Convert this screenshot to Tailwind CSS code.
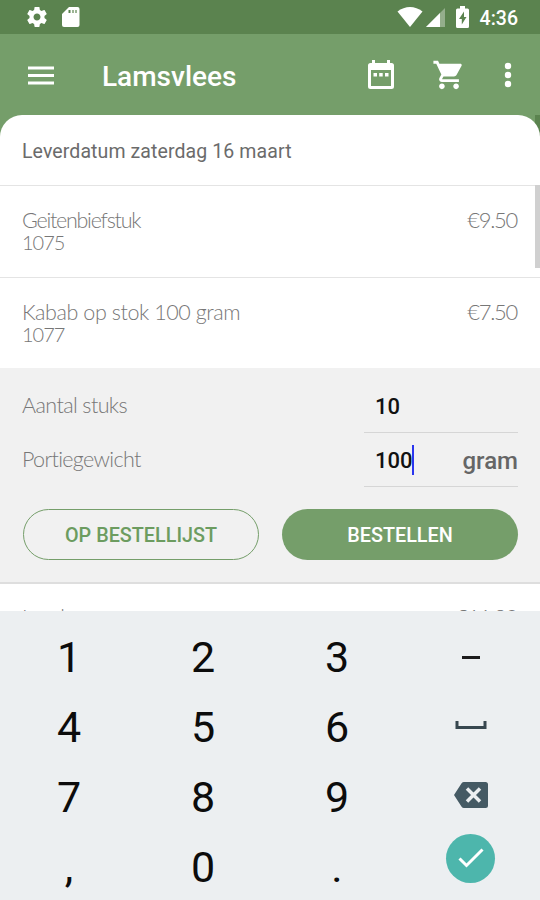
<!DOCTYPE html>
<html lang="nl">
<head>
    <meta charset="UTF-8">
    <meta name="viewport" content="width=device-width, initial-scale=1.0">
    <title>Lamsvlees</title>
    <script src="https://cdn.jsdelivr.net/npm/@tailwindcss/browser@4"></script>
</head>
<body class="bg-[#759e6a] font-['Roboto',sans-serif]">
<div class="w-[540px] h-[900px] overflow-hidden flex flex-col">
    <!-- Status bar -->
    <div class="h-[34px] shrink-0 bg-[#5b834f] flex items-center justify-between pl-[25px] pr-[22px] text-white">
        <div class="flex items-center gap-[11px]">
            <svg class="w-6 h-6" viewBox="0 0 24 24" fill="currentColor"><path d="M19.43 12.98c.04-.32.07-.64.07-.98s-.03-.66-.07-.98l2.11-1.65c.19-.15.24-.42.12-.64l-2-3.46c-.12-.22-.39-.3-.61-.22l-2.49 1c-.52-.4-1.08-.73-1.69-.98l-.38-2.65C14.46 2.18 14.25 2 14 2h-4c-.25 0-.46.18-.49.42l-.38 2.65c-.61.25-1.17.59-1.69.98l-2.49-1c-.23-.09-.49 0-.61.22l-2 3.46c-.13.22-.07.49.12.64l2.11 1.65c-.04.32-.07.65-.07.98s.03.66.07.98l-2.11 1.65c-.19.15-.24.42-.12.64l2 3.46c.12.22.39.3.61.22l2.49-1c.52.4 1.08.73 1.69.98l.38 2.65c.03.24.24.42.49.42h4c.25 0 .46-.18.49-.42l.38-2.65c.61-.25 1.17-.59 1.69-.98l2.49 1c.23.09.49 0 .61-.22l2-3.46c.12-.22.07-.49-.12-.64l-2.11-1.65zM12 15.5c-1.93 0-3.5-1.57-3.5-3.5s1.57-3.5 3.5-3.5 3.5 1.57 3.5 3.5-1.57 3.5-3.5 3.5z"/></svg>
            <svg class="w-[22px] h-6" viewBox="0 0 22 24"><path fill="currentColor" d="M9 2h8.500a2 2 0 0 1 2 2v16a2 2 0 0 1-2 2H4a2 2 0 0 1-2-2V9z"/><path fill="#5b834f" d="M8.500 5h2v3h-2z"/><path fill="#5b834f" fill-opacity=".6" d="M12 5h2v3h-2zM15 5h2v3h-2z"/></svg>
        </div>
        <div class="flex items-center">
            <svg class="w-[26px] h-[22px]" viewBox="0 0 26 22"><path fill="currentColor" d="M13 21L.5 5.500C8-.5 18-.5 25.500 5.500z"/></svg>
            <svg class="w-[20px] h-[20px] ml-[3px]" viewBox="0 0 20 20"><path fill="#fff" fill-opacity=".35" d="M0 20L19 1v19z"/><path fill="#fff" d="M0 20L14 6v14z"/></svg>
            <svg class="w-[13px] h-[22px] ml-[10px]" viewBox="0 0 13 22"><path fill="currentColor" d="M4 0h5v2.500h2.500A1.500 1.500 0 0 1 13 4v16.500a1.500 1.500 0 0 1-1.500 1.500h-10A1.500 1.500 0 0 1 0 20.500V4a1.500 1.500 0 0 1 1.500-1.500H4z"/><path fill="#5b834f" d="M8 5.500L3 13h2.800v5.500L10.500 11H8z"/></svg>
            <span class="ml-[11px] text-[19.500px] font-medium leading-none mt-[3px]">4:36</span>
        </div>
    </div>

    <!-- Toolbar -->
    <div class="h-[81px] shrink-0 flex items-center text-white pl-[28px]">
        <svg class="w-[26px] h-[19px] mt-[2px]" viewBox="0 0 26 19" fill="currentColor"><path d="M0 .5h26v3H0zM0 8h26v3H0zM0 15.500h26v3H0z"/></svg>
        <h1 class="ml-[48px] text-[28px] font-medium w-[265px] leading-none mt-[5px]">Lamsvlees</h1>
        <svg class="w-[28px] h-[30px] mt-px" viewBox="0 0 28 30"><path fill="currentColor" fill-rule="evenodd" d="M5 0h3v3h12V0h3v3h1.500A2.500 2.500 0 0 1 27 5.500v21a2.500 2.500 0 0 1-2.500 2.500h-21A2.500 2.500 0 0 1 1 26.500v-21A2.500 2.500 0 0 1 3.500 3H5zM4 10v16h20V10z"/><path fill="currentColor" d="M6.500 13h3.500v3.500H6.500zM12.200 13h3.500v3.500h-3.500zM18 13h3.500v3.500H18z"/></svg>
        <svg class="w-[34px] h-[34px] ml-[37px]" viewBox="0 0 24 24" fill="currentColor"><path d="M7 18c-1.100 0-1.990.9-1.990 2S5.900 22 7 22s2-.9 2-2-.9-2-2-2zM1 2v2h2l3.600 7.590-1.350 2.450c-.16.280-.25.610-.25.960 0 1.100.9 2 2 2h12v-2H7.420c-.14 0-.25-.11-.25-.25l.03-.12.9-1.630h7.450c.75 0 1.410-.41 1.750-1.030l3.580-6.490c.08-.14.12-.31.12-.48 0-.55-.45-1-1-1H5.210l-.94-2H1zm16 16c-1.100 0-1.990.9-1.990 2s.89 2 1.990 2 2-.9 2-2-.9-2-2-2z"/></svg>
        <svg class="w-[8px] h-[26px] ml-[38px]" viewBox="0 0 8 26" fill="currentColor"><circle cx="4" cy="4" r="3.200"/><circle cx="4" cy="13" r="3.200"/><circle cx="4" cy="22" r="3.200"/></svg>
    </div>

    <!-- Order list -->
    <div class="relative h-[496px] shrink-0 bg-[linear-gradient(to_right,#759e6a_535px,#5b834f_535px)]">
        <div class="h-full bg-white rounded-t-[22px] overflow-hidden text-[#777] font-['Lato',sans-serif] font-light text-[21.5px] leading-[22px]">
            <div class="h-[71px] border-b border-[#e4e4e4] px-[22px] flex items-center font-['Roboto',sans-serif] font-normal text-[19.5px] text-[#6b6b6b] tracking-[0.1px] pt-[4px]">Leverdatum zaterdag 16 maart</div>
            <div class="h-[92px] border-b border-[#e4e4e4] px-[22px] pt-[23px] flex justify-between">
                <div>
                    <p class="tracking-[-1.25px]">Geitenbiefstuk</p>
                    <p class="text-[20px] tracking-[-1px]">1075</p>
                </div>
                <p class="text-[22px] tracking-[-1.3px] mr-px">€9.50</p>
            </div>
            <div class="h-[90px] px-[22px] pt-[23px] flex justify-between">
                <div>
                    <p class="tracking-[-0.42px]">Kabab op stok 100 gram</p>
                    <p class="text-[20px] tracking-[-1px]">1077</p>
                </div>
                <p class="text-[22px] tracking-[-1.3px] mr-px">€7.50</p>
            </div>

            <!-- Order form -->
            <div class="h-[216px] bg-[#f1f1f1] border-b-2 border-[#dedede] px-[22px] pt-[11px]">
                <div class="flex justify-between h-[54px]">
                    <span class="pt-[15px] tracking-[-0.6px]">Aantal stuks</span>
                    <div class="w-[154px] border-b border-[#d6d6d6] pl-[11px] pt-[17px] font-['Roboto',sans-serif] font-medium text-[22px] text-[#111]">10</div>
                </div>
                <div class="flex justify-between h-[54px]">
                    <span class="pt-[15px] tracking-[-0.65px]">Portiegewicht</span>
                    <div class="w-[154px] border-b border-[#d6d6d6] pl-[11px] pt-[17px] font-['Roboto',sans-serif] font-medium text-[22px] text-[#111] flex items-start">
                        <span>100</span>
                        <span class="w-[2px] h-[30px] -mt-[5px] -ml-px bg-[#2a35ee]"></span>
                        <span class="ml-auto text-[24px] text-[#666]">gram</span>
                    </div>
                </div>
                <div class="flex gap-[23px] pl-px mt-[22px] font-['Roboto',sans-serif] font-medium text-[19.800px]">
                    <button class="w-[236px] h-[51px] rounded-full border border-[#759e6a] text-[#6c9c60] pt-[3px]">OP BESTELLIJST</button>
                    <button class="w-[236px] h-[51px] rounded-full bg-[#759e6a] text-white pt-[3px]">BESTELLEN</button>
                </div>
            </div>
            <div class="px-[22px] pt-[22px] flex justify-between">
                <p class="tracking-[-0.6px]">Lende</p>
                <p class="text-[22px] tracking-[-1.3px] mr-px">€11.90</p>
            </div>
        </div>
        <!-- Scrollbar -->
        <div class="absolute right-0 top-[70px] w-[5px] h-[83px] bg-[#d0d0d0]"></div>
    </div>

    <!-- Numeric keyboard -->
    <div class="h-[289px] shrink-0 bg-[#eceff1] pt-[11px] pl-[2px] grid grid-cols-[repeat(4,134px)] auto-rows-[70px] items-center justify-items-center text-[43px] leading-none text-[#0c0c0c]">
        <span>1</span>
        <span>2</span>
        <span>3</span>
        <span class="w-[18px] h-[3px] bg-[#1c1c1c]"></span>
        <span>4</span>
        <span>5</span>
        <span>6</span>
        <svg class="w-[32px] h-[8px] -mt-[4px]" viewBox="0 0 32 8"><path fill="none" stroke="#37474f" stroke-width="3" d="M2 0v6.500h28V0"/></svg>
        <span>7</span>
        <span>8</span>
        <span>9</span>
        <svg class="w-[34px] h-[26px] -mt-[4px]" viewBox="0 0 34 26"><path fill="#455a64" d="M10 0h21.500A2.500 2.500 0 0 1 34 2.500v21a2.500 2.500 0 0 1-2.500 2.500H10a3 3 0 0 1-2.400-1.200L0 13l7.600-11.800A3 3 0 0 1 10 0z"/><path stroke="#eceff1" stroke-width="3.500" d="M13 6.500l13 13M26 6.500l-13 13"/></svg>
        <span>,</span>
        <span>0</span>
        <span>.</span>
        <div class="w-[49px] h-[49px] rounded-full bg-[#4db6ac] -mt-[18px] -ml-px flex items-center justify-center">
            <svg class="w-[26px] h-[20px]" viewBox="0 0 26 20"><path fill="none" stroke="#fff" stroke-width="3" d="M1.500 10.500l7 7L24.500 1.500"/></svg>
        </div>
    </div>
</div>
</body>
</html>
